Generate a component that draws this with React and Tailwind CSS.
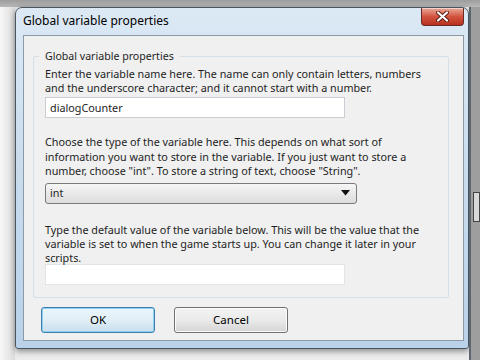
import React from "react";

const font = { fontFamily: '"Segoe UI", "Noto Sans", "Open Sans", sans-serif' };

function CloseButton() {
  return (
    <div className="w-[43px] h-[18px] rounded-b-[4px] border border-t-0 border-[#6b2a22] bg-gradient-to-b from-[#e9a99a] via-[#d2543f] to-[#b8301f] flex items-center justify-center shadow-[inset_0_1px_0_rgba(255,255,255,0.5)]">
      <svg width="13" height="11" viewBox="0 0 13 11">
        <path d="M2 1.5 L11 9.5 M11 1.5 L2 9.5" stroke="#5a1a12" strokeWidth="4" strokeLinecap="round" />
        <path d="M2 1.5 L11 9.5 M11 1.5 L2 9.5" stroke="#ffffff" strokeWidth="2.2" strokeLinecap="round" />
      </svg>
    </div>
  );
}

export default function App() {
  return (
    <div className="w-[480px] h-[360px] overflow-hidden bg-[#ececec] flex flex-col text-[#1e1e1e]" style={font}>
      <div className="h-[7px] shrink-0 bg-gradient-to-b from-[#9d9d9d] to-[#b8b8b8]" />
      <div className="flex flex-1">
        <div className="w-[15px] shrink-0 bg-gradient-to-r from-[#f7f7f7] to-[#dcdcdc]" />

        <div className="w-[454px] h-[342px] shrink-0 rounded-t-[7px] rounded-b-[3px] border border-[#4a5560] bg-gradient-to-b from-[#dce9f5] via-[#c8dcee] to-[#b9d2ea] shadow-[0_2px_6px_rgba(0,0,0,0.45)] flex flex-col">
          <div className="h-[27px] shrink-0 flex items-start justify-between pl-[7px] pr-[4px]">
            <span className="mt-[5px] text-[12px] leading-[16px] text-black">Global variable properties</span>
            <CloseButton />
          </div>

          <div className="flex-1 mb-[7px] ml-[7px] mr-[4px] border border-[#8c9aa8] bg-[#f0f0f0] flex flex-col">
            <div className="mt-[20px] ml-[9px] mr-[14px] border border-[#d5dfe5] rounded-[2px] relative pt-[10px] pb-[12px] pl-[11px] pr-[4px] text-[10.8px] leading-[14px] whitespace-nowrap">
              <span className="absolute -top-[8px] left-[5px] px-[6px] bg-[#f0f0f0] text-[10.6px] leading-[14px]">
                Global variable properties
              </span>
              <p>
                Enter the variable name here. The name can only contain letters, numbers
                <br />
                and the underscore character; and it cannot start with a number.
              </p>
              <div className="mt-[2px] w-[300px] h-[21px] bg-white border border-[#c9ccd2] px-[4px] flex items-center">
                dialogCounter
              </div>

              <p className="mt-[17px] leading-[14.5px]">
                Choose the type of the variable here. This depends on what sort of
                <br />
                information you want to store in the variable. If you just want to store a
                <br />
                number, choose "int". To store a string of text, choose "String".
              </p>
              <div className="mt-[4px] w-[312px] h-[21px] rounded-[3px] border border-[#7b7b7b] bg-gradient-to-b from-[#f6f6f6] to-[#dcdcdc] pl-[4px] pr-[6px] flex items-center justify-between">
                <span>int</span>
                <svg width="9" height="6" viewBox="0 0 9 6">
                  <path d="M0 0 H9 L4.5 5.5 Z" fill="#111" />
                </svg>
              </div>

              <p className="mt-[19px]">
                Type the default value of the variable below. This will be the value that the
                <br />
                variable is set to when the game starts up. You can change it later in your
                <br />
                scripts.
              </p>
              <div className="-mt-[1px] w-[300px] h-[21px] bg-white border border-[#e2e4e8]" />
            </div>

            <div className="mt-[9px] ml-[17px] flex gap-[19px]">
              <button className="w-[114px] h-[26px] rounded-[3px] border border-[#3c7fb1] bg-gradient-to-b from-[#eaf6fd] via-[#e2eef6] to-[#c6dfee] shadow-[inset_0_0_0_1px_#8fd0ee] text-[11.5px] text-black">
                OK
              </button>
              <button className="w-[114px] h-[26px] rounded-[3px] border border-[#707070] bg-gradient-to-b from-[#f2f2f2] via-[#ebebeb] to-[#d4d4d4] shadow-[inset_0_0_0_1px_#fcfcfc] text-[11.5px] text-black">
                Cancel
              </button>
            </div>
          </div>
        </div>

        <div className="flex-1 bg-[#9e9e9e] border-l-2 border-[#5c6670] flex flex-col">
          <div className="mt-[185px] h-[30px] border border-[#444] bg-[#d8d8d8] ml-[2px]" />
        </div>
      </div>
    </div>
  );
}
